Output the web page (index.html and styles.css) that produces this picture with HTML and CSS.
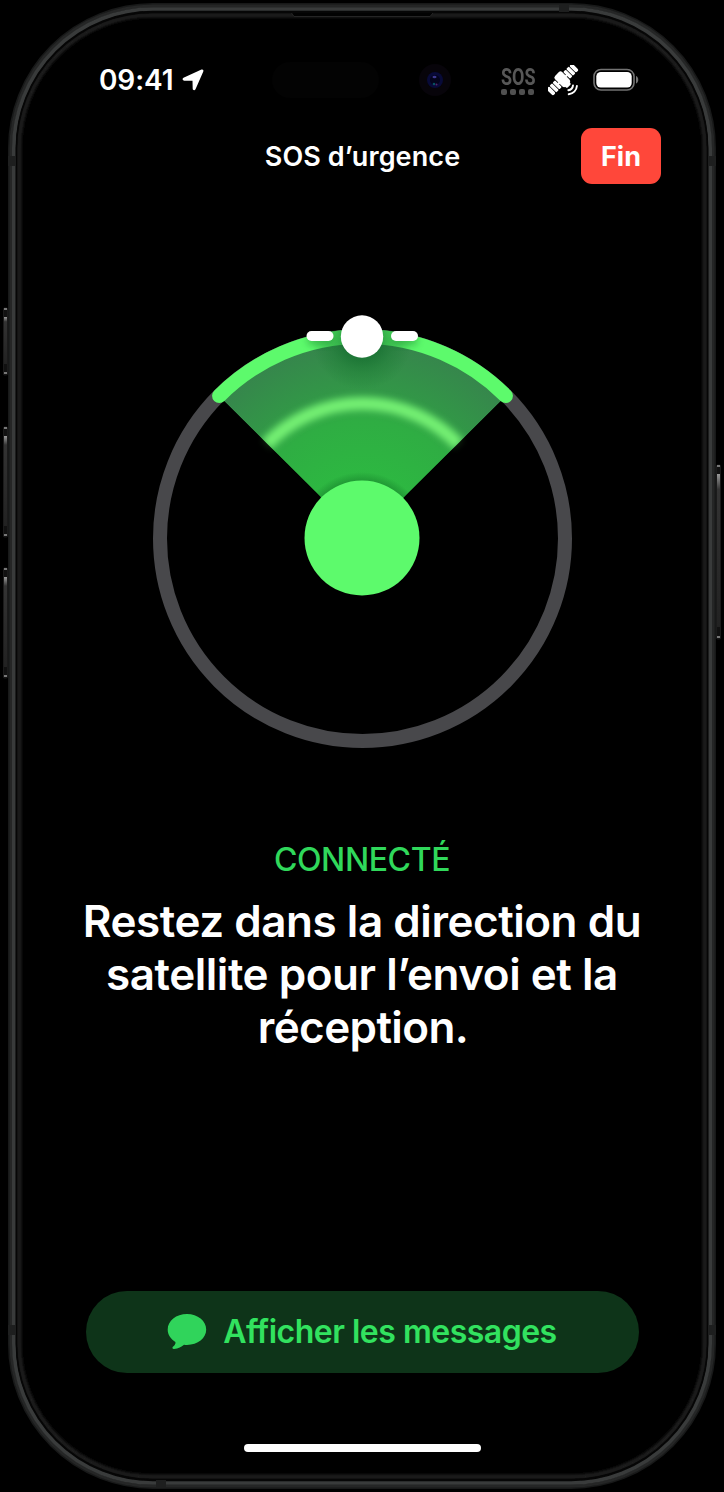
FILE: index.html
```html
<!DOCTYPE html>
<html lang="fr">
<head>
<meta charset="utf-8">
<title>SOS d’urgence</title>
<link rel="stylesheet" href="styles.css">
</head>
<body>
<div class="phone">
  <svg class="frame" viewBox="0 0 724 1492" aria-hidden="true">
    <defs>
      <linearGradient id="btn" x1="0" y1="0" x2="0" y2="1">
        <stop offset="0" stop-color="#999"/><stop offset=".1" stop-color="#333"/><stop offset="1" stop-color="#222"/>
      </linearGradient>
      <filter id="glow" x="-5%" y="-5%" width="110%" height="110%"><feGaussianBlur stdDeviation="1.800"/></filter>
    </defs>
    <rect x="19" y="15" width="686" height="1462" rx="133" fill="none" stroke="#222" stroke-width="4" filter="url(#glow)"/>
    <rect x="9" y="4" width="706" height="1484" rx="144" fill="none" stroke="#181919" stroke-width="2"/>
    <rect x="11" y="6" width="702" height="1480" rx="142" fill="none" stroke="#252626" stroke-width="3"/>
    <rect x="13.800" y="9" width="696.400" height="1474" rx="139" fill="none" stroke="#393b3b" stroke-width="3.600"/>
    <rect x="16.500" y="12.500" width="691" height="1467" rx="136" fill="none" stroke="#060606" stroke-width="1.400"/>
    <g fill="#1e1f1f">
      <rect x="8" y="156" width="8" height="10"/><rect x="708" y="156" width="8" height="10"/>
      <rect x="8" y="1325" width="8" height="10"/><rect x="708" y="1325" width="8" height="10"/>
      <rect x="559" y="4" width="10" height="8"/><rect x="156" y="1480" width="10" height="8"/>
    </g>
    <path d="M291.500 13L294 16.500H430L433 13" fill="#020202" stroke="#252525"/>
    <g fill="#111" stroke="#1b1b1b">
      <rect x="3.500" y="308" width="4" height="67" rx="1"/>
      <rect x="3.500" y="427" width="4" height="110" rx="1"/>
      <rect x="3.500" y="568" width="4" height="110" rx="1"/>
      <rect x="716.500" y="465" width="4" height="174" rx="1"/>
    </g>
    <g fill="url(#btn)">
      <rect x="4" y="317" width="3" height="47"/><rect x="4" y="436" width="3" height="90"/>
      <rect x="4" y="577" width="3" height="90"/><rect x="717" y="474" width="3" height="153"/>
    </g>
    <g fill="#777">
      <rect x="4" y="308" width="3" height="2"/><rect x="4" y="372" width="3" height="2"/>
      <rect x="4" y="427" width="3" height="2"/><rect x="4" y="534" width="3" height="2"/>
      <rect x="4" y="568" width="3" height="2"/><rect x="4" y="675" width="3" height="2"/>
      <rect x="717" y="465" width="3" height="2"/><rect x="717" y="636" width="3" height="2"/>
    </g>
  </svg>

  <header class="status">
    <div class="clock">
      <span>09:41</span>
      <svg width="22" height="22" viewBox="0 0 22 22"><path d="M1.500 8.800 19.500.6c1.300-.5 2.300.5 1.800 1.800L13.500 20.300c-.7 1.500-2.700 1.200-2.800-.5l-.2-8-8.200-.1C.4 11.600 0 9.600 1.500 8.800Z" fill="#fff"/></svg>
    </div>
    <div class="island">
      <span class="sensor"></span>
      <svg width="34" height="34" viewBox="0 0 34 34"><circle cx="17" cy="17" r="16" fill="#07040a"/><circle cx="17" cy="17" r="8" fill="#080a38"/><circle cx="17" cy="17" r="5" fill="#04041c"/><ellipse cx="16.500" cy="14" rx="2" ry="1.200" fill="#3c388f"/><circle cx="16" cy="21" r="1.300" fill="#075061"/><circle cx="18.500" cy="21.500" r="1" fill="#56236d"/></svg>
    </div>
    <div class="indicators">
      <div class="sos"><span>SOS</span><i></i><i></i><i></i><i></i></div>
      <svg class="sat" width="32" height="32" viewBox="0 0 32 32">
        <g transform="translate(14.500 14.500) rotate(-45)" fill="#fff">
          <rect x="-5" y="-7.800" width="10" height="15" rx="2.300"/>
          <rect x="-3.200" y="5" width="6.400" height="4.300" rx="1.600"/>
          <rect x="-7" y="-1" width="14" height="2"/>
          <rect x="5.800" y="-4.800" width="3.500" height="9.600" rx="1"/><rect x="10" y="-4.800" width="3.600" height="9.600" rx="1"/><rect x="14.300" y="-4.800" width="4" height="9.600" rx="1.800"/>
          <rect x="-9.300" y="-4.800" width="3.500" height="9.600" rx="1"/><rect x="-13.600" y="-4.800" width="3.600" height="9.600" rx="1"/><rect x="-18.300" y="-4.800" width="4" height="9.600" rx="1.800"/>
        </g>
        <g fill="none" stroke="#fff" stroke-width="1.900" stroke-linecap="round"><path d="M25 20.500A5.500 5.500 0 0 1 20.300 25.200"/><path d="M28.900 21A8.800 8.800 0 0 1 20.700 29.200"/></g>
      </svg>
      <svg class="battery" width="46" height="24" viewBox="0 0 46 24"><rect x="1" y="1.500" width="40" height="20.500" rx="7" fill="none" stroke="#737373" stroke-width="1.600"/><rect x="3.300" y="4" width="35.400" height="15.500" rx="4.500" fill="#fff"/><path d="M43 8c3 1.200 3 6.300 0 7.500Z" fill="#737373"/></svg>
    </div>
  </header>

  <div class="navbar">
    <h1>SOS d’urgence</h1>
    <button class="end">Fin</button>
  </div>

  <main>
    <svg class="radar" width="440" height="450" viewBox="142 308 440 450">
      <defs>
        <radialGradient id="beam" gradientUnits="userSpaceOnUse" cx="362.500" cy="538.500" r="196">
          <stop offset=".3" stop-color="#2db841"/><stop offset=".6" stop-color="#2fad43"/><stop offset=".75" stop-color="#329747"/><stop offset="1" stop-color="#36864c"/>
        </radialGradient>
        <clipPath id="sector"><path d="M362.500 538.500 219 395A203 203 0 0 1 506 395Z"/></clipPath>
        <clipPath id="head"><circle cx="362.500" cy="538.500" r="209.500"/></clipPath>
        <filter id="soft" x="-20%" y="-40%" width="140%" height="180%"><feGaussianBlur stdDeviation="3.500"/></filter>
        <radialGradient id="shade"><stop offset=".4" stop-color="#0d6828" stop-opacity=".55"/><stop offset=".65" stop-color="#11702a" stop-opacity=".3"/><stop offset="1" stop-color="#11702a" stop-opacity="0"/></radialGradient>
        <radialGradient id="coreShade"><stop offset=".86" stop-color="#085c1d" stop-opacity=".35"/><stop offset="1" stop-color="#085c1d" stop-opacity="0"/></radialGradient>
      </defs>
      <circle cx="362.500" cy="538.500" r="202.500" fill="none" stroke="#48484b" stroke-width="14"/>
      <path d="M362.500 538.500 222 399A198 198 0 0 1 503 399Z" fill="url(#beam)"/>
      <path d="M266 445A133 133 0 0 1 459 445" fill="none" stroke="#74f073" stroke-width="13" filter="url(#soft)"/>
      <path d="M222 399 362.500 538.500 503 399V500L362.500 600 222 500Z" fill="#000" opacity=".85"/>
      <circle cx="362" cy="538" r="66" fill="url(#coreShade)" clip-path="url(#sector)"/>
      <path d="M219.300 395.800A202.500 202.500 0 0 1 505.700 395.800" fill="none" stroke="#5dfa6c" stroke-width="14.500" stroke-linecap="round"/>
      <g clip-path="url(#head)">
        <circle cx="362" cy="340" r="50" fill="url(#shade)"/>
        <g fill="#167c2d" opacity=".4" filter="url(#soft)"><rect x="307" y="334" width="27" height="12" rx="6"/><rect x="391" y="334" width="27" height="12" rx="6"/></g>
      </g>
      <g fill="#fff"><rect x="306.500" y="331" width="27" height="10" rx="5"/><rect x="391" y="331" width="27" height="10" rx="5"/><circle cx="362" cy="336.500" r="21.200"/></g>
      <circle cx="362" cy="538" r="57.500" fill="#5dfa6c"/>
    </svg>
    <p class="state">CONNECTÉ</p>
    <p class="hint">Restez dans la direction du<br>satellite pour l’envoi et la<br><span class="last">réception.</span></p>
  </main>

  <footer>
    <button class="messages">
      <svg width="40" height="38" viewBox="0 0 40 38"><path d="M20 1C9.200 1 .7 7.800.7 16.500c0 5.100 2.900 9.600 7.700 12.400.5 1.700-.7 3.300-2.500 4.900-1 .9-.3 2.500 1.200 2.300 4.300-.7 7.300-2.400 9.900-4.400 1 .2 2 .2 3 .2 10.700 0 19.200-6.800 19.200-15.400S30.700 1 20 1Z" fill="#30d45b"/></svg>
      <span>Afficher les messages</span>
    </button>
    <div class="home"></div>
  </footer>
</div>
</body>
</html>
```
FILE: styles.css
```css
* { box-sizing: border-box; }
body { margin: 0; background: #000; color: #fff; font-family: Inter, "Liberation Sans", sans-serif; }
p, h1 { margin: 0; }
button { border: 0; padding: 0; font-family: inherit; }
svg { display: block; flex: none; }
.phone { position: relative; width: 724px; height: 1492px; display: flex; flex-direction: column; overflow: hidden; }
.frame { position: absolute; inset: 0; width: 724px; height: 1492px; pointer-events: none; }

.status { height: 120px; padding: 60px 80px 20px 99px; display: flex; align-items: center; }
.clock { width: 173px; display: flex; align-items: center; gap: 8px; font-size: 28px; font-weight: 600; }
.clock span { width: 75px; letter-spacing: -.1px; white-space: nowrap; }
.island { width: 229px; display: flex; align-items: center; gap: 39px; }
.sensor { width: 107px; height: 36px; border-radius: 18px; background: #030303; }
.indicators { display: flex; align-items: center; }
.sos { width: 33px; margin: 2px 14px 0 0; display: grid; grid-template-columns: repeat(4, 6px); justify-content: space-between; row-gap: 2px; }
.sos span { grid-column: 1 / 5; height: 20px; font: 700 23px/22px "Roboto", sans-serif; transform: scaleX(.78); transform-origin: left; color: #575757; }
.sos i { height: 6px; border-radius: 2px; background: #505050; }
.sat { margin: 1px 13px 0 0; }

.navbar { height: 72px; padding: 8px 63px 8px 0; display: grid; grid-template-columns: 581px 80px; align-items: center; }
h1 { padding: 2px 0 0 144px; text-align: center; font-size: 27px; line-height: 54px; font-weight: 600; letter-spacing: .1px; white-space: nowrap; }
.end { width: 80px; height: 56px; border-radius: 11px; background: #ff473a; color: #fff; font-size: 27px; font-weight: 700; }

main { flex: 1; display: flex; flex-direction: column; align-items: center; padding-top: 116px; }
.state { margin-top: 82px; font-size: 32px; line-height: 40px; font-weight: 500; letter-spacing: -.4px; color: #30d85b; }
.hint { margin-top: 15px; text-align: center; font-size: 44px; line-height: 53px; font-weight: 600; letter-spacing: -.46px; white-space: nowrap; }
.last { letter-spacing: -.6px; padding-left: 2px; }

footer { display: flex; flex-direction: column; align-items: center; gap: 71px; padding-bottom: 40px; }
.messages { width: 553px; height: 82px; border-radius: 41px; background: #0e3419; color: #32e25f; display: flex; align-items: center; justify-content: center; gap: 16px; font-size: 32px; font-weight: 600; letter-spacing: -.5px; white-space: nowrap; }
.messages span { padding-bottom: 1px; }
.home { width: 237px; height: 8px; border-radius: 4px; background: #fff; }
```
